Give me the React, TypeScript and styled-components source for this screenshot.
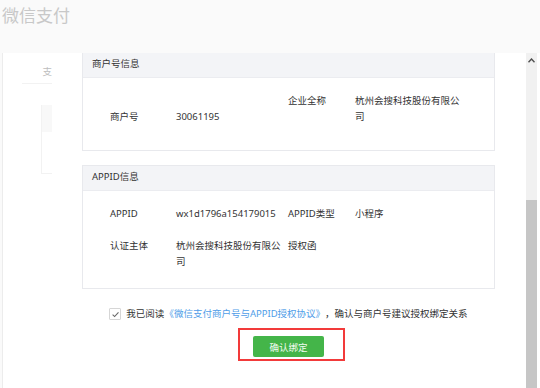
import React from 'react';
import styled, { createGlobalStyle } from 'styled-components';

const GlobalStyle = createGlobalStyle`
    html, body {
        margin: 0;
        padding: 0;
        background: #fafafa;
    }
    body {
        font-family: "Noto Sans", "Noto Sans CJK SC", sans-serif;
        font-size: 9.5px;
        color: #333333;
    }
`;

type CellAlign = 'start' | 'end';

type InfoRow = {
    align: CellAlign[];
    cells: string[];
};

const merchantRows: InfoRow[] = [
    {
        align: ['end', 'end', 'start', 'start'],
        cells: ['商户号', '30061195', '企业全称', '杭州会搜科技股份有限公司'],
    },
];

const appidRows: InfoRow[] = [
    { align: ['start', 'start', 'start', 'start'], cells: ['APPID', 'wx1d1796a154179015', 'APPID类型', '小程序'] },
    { align: ['start', 'start', 'start', 'start'], cells: ['认证主体', '杭州会搜科技股份有限公司', '授权函', ''] },
];

const Section: React.FC<{ title: string; rows: InfoRow[]; bodyPadding: string }> = ({ title, rows, bodyPadding }) => (
    <Card>
        <CardHeader>{title}</CardHeader>
        <CardBody $padding={bodyPadding}>
            {rows.map((row, i) => (
                <Row key={i}>
                    {row.cells.map((cell, j) => (
                        <Cell key={j} $align={row.align[j]}>
                            {cell}
                        </Cell>
                    ))}
                </Row>
            ))}
        </CardBody>
    </Card>
);

const App: React.FC = () => {
    return (
        <Page>
            <GlobalStyle />
            <TopBar>
                <Title>微信支付</Title>
            </TopBar>
            <Panel>
                <Sidebar>
                    <SideTab>支</SideTab>
                    <SideLine />
                    <SideBox>
                        <SideBoxHead />
                    </SideBox>
                </Sidebar>
                <Main>
                    <Section title="商户号信息" rows={merchantRows} bodyPadding="15px 0 25px" />
                    <Section title="APPID信息" rows={appidRows} bodyPadding="15px 0 18px" />
                    <Agreement>
                        <CheckBox>
                            <svg width="9" height="9" viewBox="0 0 10 10">
                                <path d="M1.8 5.2 L4 7.3 L8.3 2.6" fill="none" stroke="#666" strokeWidth="1.2" />
                            </svg>
                        </CheckBox>
                        <span>我已阅读</span>
                        <Link>《微信支付商户号与APPID授权协议》</Link>
                        <span>，确认与商户号建议授权绑定关系</span>
                    </Agreement>
                    <ButtonRow>
                        <Highlight>
                            <ConfirmButton>确认绑定</ConfirmButton>
                        </Highlight>
                    </ButtonRow>
                </Main>
                <Scrollbar>
                    <ScrollArrow>
                        <svg width="7" height="5" viewBox="0 0 7 5">
                            <path d="M0.5 4.2 L3.5 1 L6.5 4.2" fill="none" stroke="#505050" strokeWidth="1.4" />
                        </svg>
                    </ScrollArrow>
                    <ScrollThumb />
                </Scrollbar>
            </Panel>
        </Page>
    );
};

const Page = styled.div`
    width: 540px;
    height: 388px;
    overflow: hidden;
    display: flex;
    flex-direction: column;
    background: #fafafa;
`;

const TopBar = styled.div`
    height: 53px;
    padding: 4px 0 0 2px;
    box-sizing: border-box;
`;

const Title = styled.div`
    font-family: "Noto Sans CJK SC", sans-serif;
    font-size: 17px;
    line-height: 22px;
    color: #c8c8c8;
`;

const Panel = styled.div`
    flex: 1;
    display: flex;
    margin-left: 2px;
    background: #ffffff;
    border-left: 1px solid #ececec;
    min-height: 0;
`;

const Sidebar = styled.div`
    width: 49px;
    display: flex;
    flex-direction: column;
    align-items: flex-end;
`;

const SideTab = styled.div`
    padding-top: 12px;
    height: 30px;
    box-sizing: border-box;
    color: #bdbdbd;
    line-height: 14px;
`;

const SideLine = styled.div`
    width: 30px;
    height: 1px;
    background: #f2f2f2;
`;

const SideBox = styled.div`
    margin-top: 21px;
    width: 10px;
    height: 68px;
    border-left: 1px solid #f2f2f2;
    border-bottom: 1px solid #f2f2f2;
`;

const SideBoxHead = styled.div`
    height: 27px;
    background: #f8f8f8;
`;

const Main = styled.div`
    width: 413px;
    margin-left: 30px;
    display: flex;
    flex-direction: column;
    gap: 14px;
`;

const Card = styled.div`
    border: 1px solid #e8e9ed;
    border-top: none;
    &:not(:first-child) {
        border-top: 1px solid #e8e9ed;
    }
`;

const CardHeader = styled.div`
    height: 24px;
    line-height: 22px;
    padding-left: 9px;
    background: #f3f4f7;
    border-bottom: 1px solid #ebecf0;
    color: #333;
`;

const CardBody = styled.div<{ $padding: string }>`
    padding: ${(p) => p.$padding};
    display: flex;
    flex-direction: column;
    gap: 16px;
`;

const Row = styled.div`
    display: grid;
    grid-template-columns: 66px 112px 67px 114px;
    padding-left: 27px;
    line-height: 16px;
    text-align: left;
`;

const Cell = styled.div<{ $align: CellAlign }>`
    align-self: ${(p) => p.$align};
    padding-right: 5px;
    color: #333333;
    word-break: break-all;
`;

const Agreement = styled.div`
    margin-top: 3px;
    display: flex;
    justify-content: center;
    align-items: center;
    line-height: 16px;
    white-space: nowrap;
    color: #333333;
`;

const CheckBox = styled.span`
    width: 10px;
    height: 10px;
    border: 1px solid #d6d6d6;
    border-radius: 1px;
    margin-right: 5px;
    display: inline-flex;
    align-items: center;
    justify-content: center;
`;

const Link = styled.span`
    color: #4f9de8;
`;

const ButtonRow = styled.div`
    margin-top: -8px;
    display: flex;
    justify-content: center;
    padding-left: 6px;
`;

const Highlight = styled.div`
    border: 2px solid #f23a3a;
    padding: 6px 19px 2px 13px;
`;

const ConfirmButton = styled.button`
    width: 71px;
    height: 21px;
    border: none;
    border-radius: 2px;
    background: #44b549;
    color: #f2fbf2;
    font-family: "Noto Sans CJK SC", sans-serif;
    font-size: 9.5px;
    padding: 0;
    cursor: pointer;
`;

const Scrollbar = styled.div`
    margin-left: auto;
    margin-right: 3px;
    width: 11px;
    background: #f1f1f1;
    display: flex;
    flex-direction: column;
    align-items: center;
`;

const ScrollArrow = styled.div`
    height: 14px;
    display: flex;
    align-items: center;
    justify-content: center;
`;

const ScrollThumb = styled.div`
    margin-top: 133px;
    width: 100%;
    flex: 1;
    background: #c6c6c6;
`;

export default App;
